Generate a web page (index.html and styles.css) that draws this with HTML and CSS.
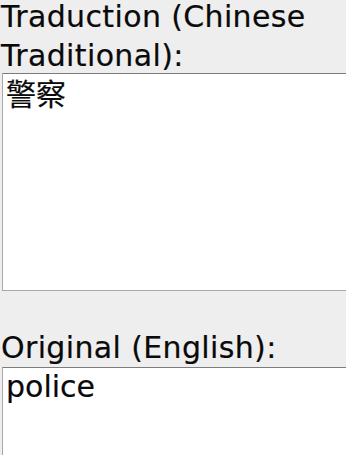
FILE: index.html
```html
<!DOCTYPE html>
<html>
<head>
<meta charset="utf-8">
<link rel="stylesheet" href="styles.css">
</head>
<body>
<div class="page">
  <div class="label label-first">Traduction (Chinese<br>Traditional):</div>
  <div class="field field-first"><span class="cjk">警察</span></div>
  <div class="label label-second">Original (English):</div>
  <div class="field field-second">police</div>
</div>
</body>
</html>
```
FILE: styles.css
```css
html, body {
  margin: 0;
  padding: 0;
  background: #eeeeee;
  overflow: hidden;
}
.page {
  width: 346px;
  height: 455px;
  overflow: hidden;
  display: flex;
  flex-direction: column;
  font-family: "DejaVu Sans", Verdana, sans-serif;
  font-size: 30px;
  color: #0a0a0a;
}
.label {
  line-height: 39px;
  padding-left: 1px;
  letter-spacing: 0.36px;
  white-space: nowrap;
  -webkit-text-stroke: 0.2px #0a0a0a;
}
.label-first {
  margin-top: -3px;
  margin-bottom: -2px;
}
.label-second {
  margin-top: 37px;
}
.field {
  flex: none;
  margin-left: 2px;
  width: 360px;
  box-sizing: border-box;
  background: #ffffff;
  border: 1px solid #a8a8a8;
  border-top-color: #7c7c7c;
  padding: 1px 3px;
  line-height: 35px;
  -webkit-text-stroke: 0.2px #0a0a0a;
}
.field-first {
  height: 218px;
}
.field-second {
  height: 120px;
}
.cjk {
  font-family: "Noto Sans CJK TC", "Noto Sans CJK SC", sans-serif;
  font-size: 30px;
}
```
